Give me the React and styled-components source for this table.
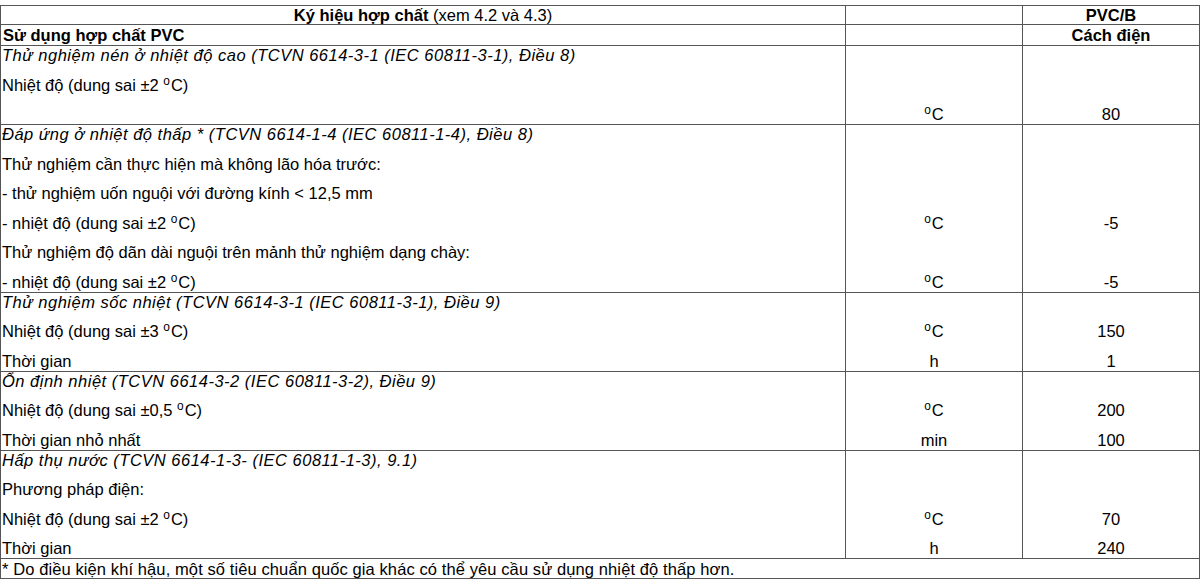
import React from 'react'
import styled, { createGlobalStyle, css } from 'styled-components'

const GlobalStyle = createGlobalStyle`
  html, body {
    margin: 0;
    padding: 0;
    background: #ffffff;
  }
  body {
    padding-top: 5px;
    font-family: "Liberation Sans", Arial, sans-serif;
    color: #000000;
  }
`

const Deg = () => <Sup>o</Sup>

const sections = [
  [
    { label: 'Thử nghiệm nén ở nhiệt độ cao (TCVN 6614-3-1 (IEC 60811-3-1), Điều 8)', italic: true },
    { label: <>Nhiệt độ (dung sai ±2 <Deg />C)</> },
    { label: '', unit: 'deg', value: '80' },
  ],
  [
    { label: 'Đáp ứng ở nhiệt độ thấp * (TCVN 6614-1-4 (IEC 60811-1-4), Điều 8)', italic: true },
    { label: 'Thử nghiệm cần thực hiện mà không lão hóa trước:' },
    { label: '- thử nghiệm uốn nguội với đường kính < 12,5 mm' },
    { label: <>- nhiệt độ (dung sai ±2 <Deg />C)</>, unit: 'deg', value: '-5' },
    { label: 'Thử nghiệm độ dãn dài nguội trên mảnh thử nghiệm dạng chày:' },
    { label: <>- nhiệt độ (dung sai ±2 <Deg />C)</>, unit: 'deg', value: '-5' },
  ],
  [
    { label: 'Thử nghiệm sốc nhiệt (TCVN 6614-3-1 (IEC 60811-3-1), Điều 9)', italic: true },
    { label: <>Nhiệt độ (dung sai ±3 <Deg />C)</>, unit: 'deg', value: '150' },
    { label: 'Thời gian', unit: 'h', value: '1' },
  ],
  [
    { label: 'Ổn định nhiệt (TCVN 6614-3-2 (IEC 60811-3-2), Điều 9)', italic: true },
    { label: <>Nhiệt độ (dung sai ±0,5 <Deg />C)</>, unit: 'deg', value: '200' },
    { label: 'Thời gian nhỏ nhất', unit: 'min', value: '100' },
  ],
  [
    { label: 'Hấp thụ nước (TCVN 6614-1-3- (IEC 60811-1-3), 9.1)', italic: true },
    { label: 'Phương pháp điện:' },
    { label: <>Nhiệt độ (dung sai ±2 <Deg />C)</>, unit: 'deg', value: '70' },
    { label: 'Thời gian', unit: 'h', value: '240' },
  ],
]

const renderUnit = (unit) => {
  if (!unit) return ''
  if (unit === 'deg') return <><Deg />C</>
  return unit
}

const App = () => {
  return (
    <>
      <GlobalStyle />
      <Table>
        <colgroup>
          <col style={{ width: 845 }} />
          <col style={{ width: 177 }} />
          <col style={{ width: 177 }} />
        </colgroup>
        <thead>
          <HeadRow>
            <HeadCell $align="center" $h={18}>
              <strong>Ký hiệu hợp chất</strong> (xem 4.2 và 4.3)
            </HeadCell>
            <HeadCell $h={18} />
            <HeadCell $align="center" $h={18}>
              <strong>PVC/B</strong>
            </HeadCell>
          </HeadRow>
          <HeadRow>
            <HeadCell $h={20}>
              <strong>Sử dụng hợp chất PVC</strong>
            </HeadCell>
            <HeadCell $h={20} />
            <HeadCell $align="center" $h={20}>
              <strong>Cách điện</strong>
            </HeadCell>
          </HeadRow>
        </thead>
        {sections.map((lines, si) => (
          <Section key={si}>
            {lines.map((line, li) => {
              const first = li === 0
              const last = li === lines.length - 1
              return (
                <Line key={li} $first={first}>
                  <Label $first={first} $last={last} $italic={line.italic}>
                    {line.label}
                  </Label>
                  <Cell $first={first} $last={last}>{renderUnit(line.unit)}</Cell>
                  <Cell $first={first} $last={last}>{line.value || ''}</Cell>
                </Line>
              )
            })}
          </Section>
        ))}
        <tfoot>
          <FootRow>
            <FootCell colSpan={3}>
              * Do điều kiện khí hậu, một số tiêu chuẩn quốc gia khác có thể yêu cầu sử dụng nhiệt độ thấp hơn.
            </FootCell>
          </FootRow>
        </tfoot>
      </Table>
    </>
  )
}

const Table = styled.table`
  width: 1199px;
  border-collapse: collapse;
  table-layout: fixed;
  border: 1px solid #555555;
  font-size: 16.5px;
  line-height: 18px;
`

const Sup = styled.span`
  font-size: 0.72em;
  line-height: 0;
  position: relative;
  top: -0.5em;
  margin-right: 1px;
`

const HeadRow = styled.tr`
  border-top: 1px solid #555555;
`

const HeadCell = styled.td`
  height: ${({ $h }) => $h}px;
  padding: 0 2px;
  text-align: ${({ $align }) => $align || 'left'};
  border-left: 1px solid #555555;
  vertical-align: middle;
  white-space: nowrap;
  overflow: hidden;
`

const Section = styled.tbody``

const Line = styled.tr`
  ${({ $first }) =>
    $first &&
    css`
      border-top: 1px solid #555555;
    `}
`

const cellBase = css`
  border-left: 1px solid #555555;
  vertical-align: bottom;
  white-space: nowrap;
  overflow: hidden;
  padding: ${({ $first }) => ($first ? '0' : '11.5px')} 2px ${({ $last }) => ($last ? '1px' : '0')};
`

const Label = styled.td`
  ${cellBase}
  padding-left: 1px;
  text-align: left;

  ${({ $italic }) =>
    $italic &&
    css`
      font-style: italic;
      letter-spacing: 0.5px;
    `}
`

const Cell = styled.td`
  ${cellBase}
  text-align: center;
`

const FootRow = styled.tr`
  border-top: 1px solid #555555;
`

const FootCell = styled.td`
  height: 19px;
  padding: 0 1px;
  vertical-align: middle;
  white-space: nowrap;
  letter-spacing: 0.1px;
`

export default App
